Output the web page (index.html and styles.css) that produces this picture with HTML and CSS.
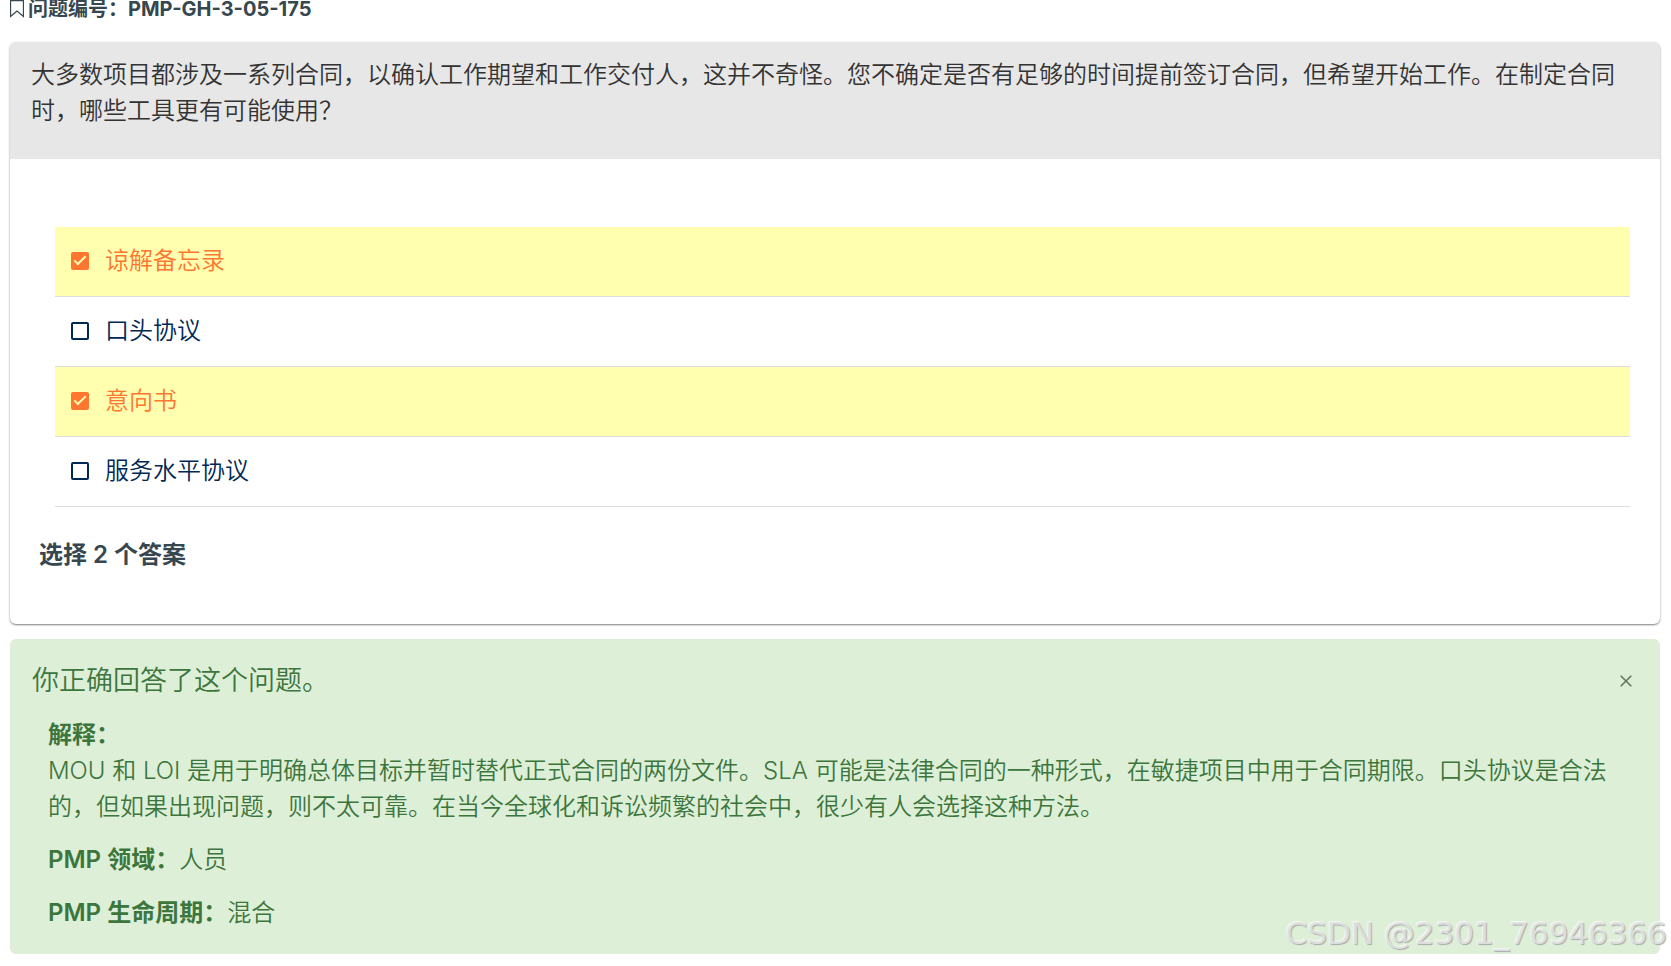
FILE: index.html
```html
<!DOCTYPE html>
<html lang="zh-CN">
<head>
  <meta charset="UTF-8">
  <meta name="viewport" content="width=device-width, initial-scale=1">
  <title>PMP-GH-3-05-175</title>
  <link rel="stylesheet" href="styles.css">
</head>
<body>
  <h1 class="question-id">
    <svg class="bookmark" width="14" height="18" viewBox="0 0 14 18" aria-hidden="true">
      <path d="M0.5 0.5H13.5V16.5L7 11L0.5 16.5Z" fill="none" stroke="#36474f" stroke-width="1.3"/>
    </svg>
    <span>问题编号：PMP-GH-3-05-175</span>
  </h1>

  <form class="card">
    <p class="question">大多数项目都涉及一系列合同，以确认工作期望和工作交付人，这并不奇怪。您不确定是否有足够的时间提前签订合同，但希望开始工作。在制定合同时，哪些工具更有可能使用？</p>
    <ul class="answers">
      <li>
        <label class="answer"><input type="checkbox" checked><span>谅解备忘录</span></label>
      </li>
      <li>
        <label class="answer"><input type="checkbox"><span>口头协议</span></label>
      </li>
      <li>
        <label class="answer"><input type="checkbox" checked><span>意向书</span></label>
      </li>
      <li>
        <label class="answer"><input type="checkbox"><span>服务水平协议</span></label>
      </li>
    </ul>
    <p class="hint">选择 2 个答案</p>
  </form>

  <section class="feedback">
    <div class="feedback-header">
      <h2>你正确回答了这个问题。</h2>
      <button type="button" class="close" aria-label="关闭">
        <svg width="12" height="12" viewBox="0 0 12 12" aria-hidden="true">
          <path d="M0.7 0.7L11.3 11.3M11.3 0.7L0.7 11.3" stroke="#66755f" stroke-width="1.6"/>
        </svg>
      </button>
    </div>
    <div class="explanation">
      <p><strong>解释：</strong><br>MOU 和 LOI 是用于明确总体目标并暂时替代正式合同的两份文件。SLA 可能是法律合同的一种形式，在敏捷项目中用于合同期限。口头协议是合法的，但如果出现问题，则不太可靠。在当今全球化和诉讼频繁的社会中，很少有人会选择这种方法。</p>
      <p><strong>PMP 领域：</strong>人员</p>
      <p><strong>PMP 生命周期：</strong>混合</p>
    </div>
  </section>

  <div class="watermark">CSDN @2301_76946366</div>
</body>
</html>
```

FILE: styles.css
```css
* {
  margin: 0;
  padding: 0;
  box-sizing: border-box;
}

body {
  position: relative;
  padding: 0 11px 12px 10px;
  font-family: Inter, "Noto Sans CJK SC", sans-serif;
  font-size: 24px;
  font-weight: 350;
  line-height: 36px;
  color: #333;
  background: #fff;
}

.question-id {
  display: flex;
  align-items: flex-start;
  gap: 4px;
  margin-bottom: 24px;
  font-size: 20px;
  font-weight: 700;
  line-height: 18px;
  color: #36474f;
}

.card {
  border-radius: 6px;
  background: #fff;
  box-shadow: 0 1px 2px rgba(0, 0, 0, 0.5);
}

.question {
  padding: 15px 21px 30px;
  border-radius: 6px 6px 0 0;
  background: #e7e7e7;
}

.answers {
  margin: 68px 30px 0 45px;
  list-style: none;
}

.answer {
  display: flex;
  align-items: center;
  gap: 16px;
  height: 70px;
  padding: 0 16px 2px;
  border-bottom: 1px solid #ddd;
  color: #002855;
  cursor: pointer;
}

.answer:has(input:checked) {
  color: #ff7631;
  background: #ffffaf;
}

.answer input {
  appearance: none;
  position: relative;
  width: 18px;
  height: 18px;
  border: 2px solid #002855;
  border-radius: 2px;
}

.answer input:checked {
  border-color: #ff7631;
  background: #ff7631;
}

/* tick mark */
.answer input:checked::after {
  content: "";
  box-sizing: border-box;
  position: absolute;
  left: 4px;
  top: -1px;
  width: 6px;
  height: 12px;
  border: solid #ffffaf;
  border-width: 0 2px 2px 0;
  transform: rotate(45deg);
}

.hint {
  padding: 30px 29px 51px;
  font-weight: 600;
  color: #36474f;
}

.feedback {
  margin-top: 15px;
  padding: 24px 22px 23px;
  border-radius: 6px;
  color: #3c763d;
  background: #deefd8;
}

.feedback-header {
  display: flex;
  align-items: center;
  justify-content: space-between;
}

.feedback-header h2 {
  font-size: 27px;
  font-weight: 350;
}

.close {
  display: flex;
  padding: 6px;
  border: none;
  background: none;
  cursor: pointer;
}

.explanation {
  display: flex;
  flex-direction: column;
  gap: 17px;
  padding: 18px 16px 0;
}

strong {
  font-weight: 600;
}

.watermark {
  position: absolute;
  right: 4px;
  bottom: 15px;
  font-family: "DejaVu Sans", sans-serif;
  font-size: 31px;
  font-weight: 400;
  color: rgba(225, 228, 225, 0.9);
  text-shadow: 1px 1px 1px #aaa, -1px -1px 0 #f4f7f3;
}
```
